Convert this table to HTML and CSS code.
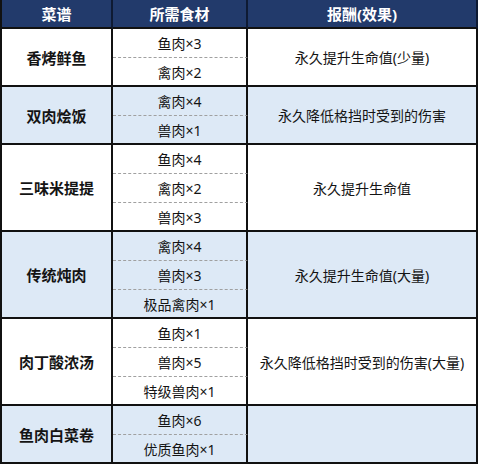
FILE: index.html
```html
<!DOCTYPE html>
<html lang="zh">
<head>
<meta charset="utf-8">
<link rel="stylesheet" href="styles.css">
</head>
<body>
<div class="grid">
  <div class="hd">菜谱</div>
  <div class="hd">所需食材</div>
  <div class="hd last">报酬(效果)</div>

  <div class="dish w" style="grid-row: span 2">香烤鲜鱼</div>
  <div class="ing w">鱼肉×3</div>
  <div class="eff w" style="grid-row: span 2">永久提升生命值(少量)</div>
  <div class="ing w end">禽肉×2</div>

  <div class="dish b" style="grid-row: span 2">双肉烩饭</div>
  <div class="ing b">禽肉×4</div>
  <div class="eff b" style="grid-row: span 2">永久降低格挡时受到的伤害</div>
  <div class="ing b end">兽肉×1</div>

  <div class="dish w" style="grid-row: span 3">三味米提提</div>
  <div class="ing w">鱼肉×4</div>
  <div class="eff w" style="grid-row: span 3">永久提升生命值</div>
  <div class="ing w">禽肉×2</div>
  <div class="ing w end">兽肉×3</div>

  <div class="dish b" style="grid-row: span 3">传统炖肉</div>
  <div class="ing b">禽肉×4</div>
  <div class="eff b" style="grid-row: span 3">永久提升生命值(大量)</div>
  <div class="ing b">兽肉×3</div>
  <div class="ing b end">极品禽肉×1</div>

  <div class="dish w" style="grid-row: span 3">肉丁酸浓汤</div>
  <div class="ing w">鱼肉×1</div>
  <div class="eff w" style="grid-row: span 3">永久降低格挡时受到的伤害(大量)</div>
  <div class="ing w">兽肉×5</div>
  <div class="ing w end">特级兽肉×1</div>

  <div class="dish b" style="grid-row: span 2">鱼肉白菜卷</div>
  <div class="ing b">鱼肉×6</div>
  <div class="eff b" style="grid-row: span 2"></div>
  <div class="ing b end">优质鱼肉×1</div>
</div>
</body>
</html>
```

FILE: styles.css
```css
html, body {
  margin: 0;
  padding: 0;
  background: #ffffff;
}
body {
  font-family: "Noto Sans", "Noto Sans CJK SC", sans-serif;
  color: #141414;
}
.grid {
  display: grid;
  width: 476px;
  grid-template-columns: 111px 135px 230px;
  grid-template-rows: 29px repeat(15, 29px);
  border-left: 2px solid #111111;
}
.grid > div {
  display: flex;
  align-items: center;
  justify-content: center;
  box-sizing: border-box;
  border-right: 2px solid #111111;
  text-align: center;
}
.hd {
  background: #223a6b;
  color: #ffffff;
  font-weight: bold;
  font-size: 15px;
  border-bottom: 2px solid #111111;
  border-right-color: #0e1a33 !important;
}
.dish {
  font-weight: bold;
  font-size: 15px;
  border-bottom: 2px solid #111111;
}
.eff {
  font-size: 14px;
  border-bottom: 2px solid #111111;
}
.ing {
  font-size: 14px;
  border-bottom: 1px dashed #a0a0a0;
}
.ing.end {
  border-bottom: 2px solid #111111;
}
.w { background: #ffffff; }
.b { background: #dde9f6; }
```
